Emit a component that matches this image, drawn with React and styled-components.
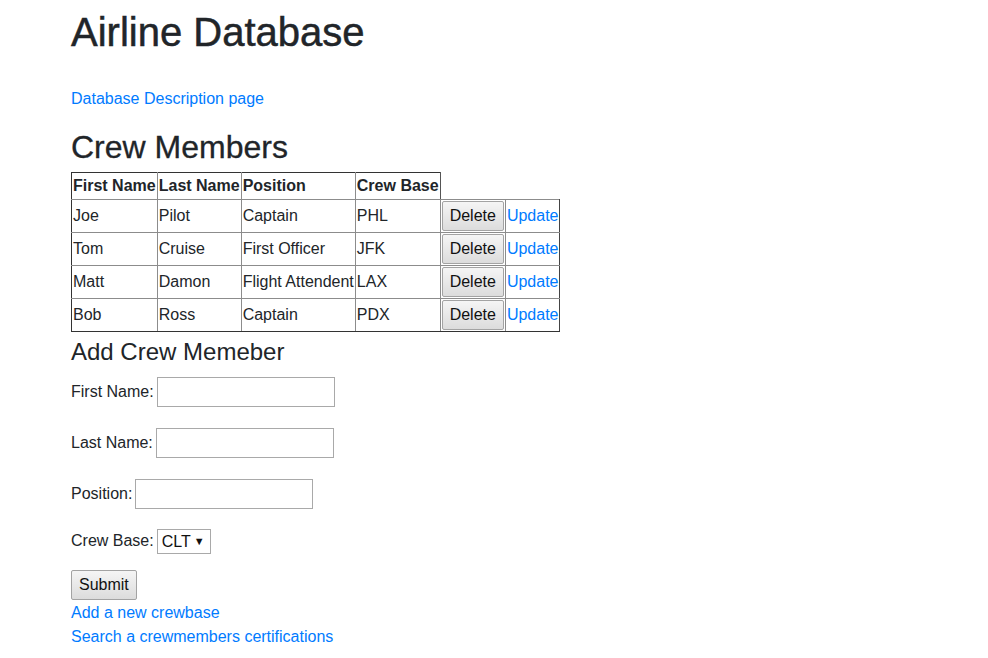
import styled, { createGlobalStyle } from 'styled-components';

const GlobalStyle = createGlobalStyle`
  html, body {
    margin: 0;
    padding: 0;
    background: #fff;
  }
  body {
    font-family: "Liberation Sans", Arial, sans-serif;
    font-size: 16px;
    line-height: 1.5;
    color: #212529;
  }
`;

/*
* === Layout ===
*/
const Page = styled.div`
  padding: 8px 0 0 71px;
  display: flex;
  flex-direction: column;
  align-items: flex-start;
`;

const Title = styled.h1`
  margin: 0 0 31px;
  font-size: 40px;
  font-weight: 500;
  line-height: 48px;
  -webkit-text-stroke: 0.5px #212529;
`;

const SectionTitle = styled.h2`
  margin: 17px 0 6px;
  font-size: 32px;
  font-weight: 500;
  line-height: 38px;
  -webkit-text-stroke: 0.3px #212529;
`;

const SubTitle = styled.h4`
  margin: 5px 0 10px;
  font-size: 24px;
  font-weight: 500;
  line-height: 29px;
`;

const Link = styled.a`
  color: #007bff;
  text-decoration: none;
  line-height: 24px;
`;

/*
* === Crew table ===
*/
const CrewTable = styled.table`
  border-collapse: collapse;
  font-size: 16px;

  th, td {
    padding: 1px;
    border: 1px solid #8c8c8c;
    text-align: left;
    white-space: nowrap;
    line-height: 24px;
  }
  th {
    font-weight: 700;
    border-top-color: #333;
  }
  tr > :first-child {
    border-left-color: #333;
  }
  tbody tr:last-child td {
    border-bottom-color: #333;
  }
  tbody tr > :last-child {
    border-right-color: #444;
  }
  thead tr > :last-child {
    border-right-color: #555;
  }
`;

const ActionCell = styled.td`
  && {
    padding: 1px;
  }
`;

const Button = styled.button`
  font-family: inherit;
  font-size: 16px;
  line-height: 24px;
  color: #111;
  padding: 2px 7px;
  border: 1px solid #a3a3a3;
  border-radius: 2px;
  background: linear-gradient(#f5f5f5, #dcdcdc);
  cursor: pointer;
`;

/*
* === Form ===
*/
const Form = styled.form`
  display: flex;
  flex-direction: column;
  align-items: flex-start;
`;

const Field = styled.div`
  display: flex;
  align-items: center;
  gap: 3px;
  height: ${(p) => (p.$short ? '26px' : '31px')};
  margin-bottom: ${(p) => (p.$short ? '16px' : '20px')};
  &:nth-of-type(3) {
    margin-bottom: 19px;
  }
`;

const Label = styled.label`
  line-height: 24px;
`;

const TextInput = styled.input`
  box-sizing: border-box;
  width: 178px;
  height: 30px;
  border: 1px solid #a9a9a9;
  padding: 1px 4px;
  font-family: inherit;
  font-size: 16px;
  background: #fff;
`;

const SelectWrap = styled.span`
  position: relative;
  display: inline-block;
`;

const Select = styled.select`
  appearance: none;
  box-sizing: border-box;
  width: 54px;
  height: 25px;
  border: 1px solid #a9a9a9;
  border-radius: 0;
  padding: 0 0 0 4px;
  font-family: inherit;
  font-size: 16px;
  color: #111;
  background: #fff;
`;

const Arrow = styled.span`
  position: absolute;
  right: 6px;
  top: 6px;
  font-size: 11px;
  line-height: 12px;
  color: #111;
  pointer-events: none;
`;

const LinkList = styled.div`
  display: flex;
  flex-direction: column;
  margin-top: 1px;
`;

const crew = [
  { first: 'Joe', last: 'Pilot', position: 'Captain', base: 'PHL' },
  { first: 'Tom', last: 'Cruise', position: 'First Officer', base: 'JFK' },
  { first: 'Matt', last: 'Damon', position: 'Flight Attendent', base: 'LAX' },
  { first: 'Bob', last: 'Ross', position: 'Captain', base: 'PDX' },
];

export default function App() {
  return (
    <>
      <GlobalStyle />
      <Page>
        <Title>Airline Database</Title>
        <Link href="#">Database Description page</Link>

        <SectionTitle>Crew Members</SectionTitle>
        <CrewTable>
          <thead>
            <tr>
              <th>First Name</th>
              <th>Last Name</th>
              <th>Position</th>
              <th>Crew Base</th>
            </tr>
          </thead>
          <tbody>
            {crew.map((c) => (
              <tr key={c.first}>
                <td>{c.first}</td>
                <td>{c.last}</td>
                <td>{c.position}</td>
                <td>{c.base}</td>
                <ActionCell><Button type="button">Delete</Button></ActionCell>
                <ActionCell><Link href="#">Update</Link></ActionCell>
              </tr>
            ))}
          </tbody>
        </CrewTable>

        <SubTitle>Add Crew Memeber</SubTitle>
        <Form onSubmit={(e) => e.preventDefault()}>
          <Field>
            <Label>First Name:</Label>
            <TextInput type="text" />
          </Field>
          <Field>
            <Label>Last Name:</Label>
            <TextInput type="text" />
          </Field>
          <Field>
            <Label>Position:</Label>
            <TextInput type="text" />
          </Field>
          <Field $short>
            <Label>Crew Base:</Label>
            <SelectWrap>
              <Select defaultValue="CLT">
                <option>CLT</option>
                <option>PHL</option>
                <option>JFK</option>
                <option>LAX</option>
                <option>PDX</option>
              </Select>
              <Arrow>▼</Arrow>
            </SelectWrap>
          </Field>
          <Button type="submit">Submit</Button>
        </Form>
        <LinkList>
          <Link href="#">Add a new crewbase</Link>
          <Link href="#">Search a crewmembers certifications</Link>
        </LinkList>
      </Page>
    </>
  );
}
